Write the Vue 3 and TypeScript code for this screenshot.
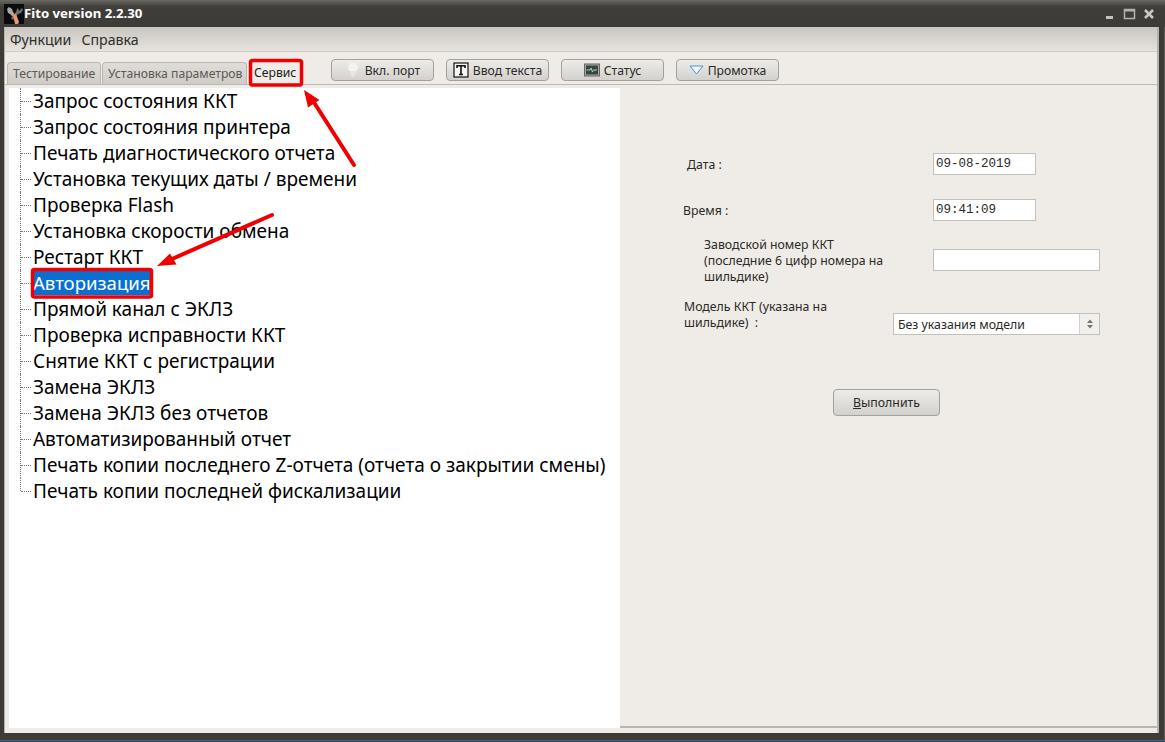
<script setup lang="ts">
const menus: string[] = ['Функции', 'Справка']
const tools: { label: string; icon: string }[] = [
  { label: 'Вкл. порт', icon: 'bulb' },
  { label: 'Ввод текста', icon: 'text' },
  { label: 'Статус', icon: 'monitor' },
  { label: 'Промотка', icon: 'tri' },
]
const items: string[] = [
  'Запрос состояния ККТ',
  'Запрос состояния принтера',
  'Печать диагностического отчета',
  'Установка текущих даты / времени',
  'Проверка Flash',
  'Установка скорости обмена',
  'Рестарт ККТ',
  'Авторизация',
  'Прямой канал с ЭКЛЗ',
  'Проверка исправности ККТ',
  'Снятие ККТ с регистрации',
  'Замена ЭКЛЗ',
  'Замена ЭКЛЗ без отчетов',
  'Автоматизированный отчет',
  'Печать копии последнего Z-отчета (отчета о закрытии смены)',
  'Печать копии последней фискализации',
]
</script>

<template>
  <div class="window">
    <header class="titlebar">
      <svg class="appicon" width="20" height="20" viewBox="0 0 20 20">
        <rect width="20" height="20" fill="#0b0b0b" />
        <path d="M3 5l2-2 3 2 1 3 3 4-2 2-4-4-2-1z" fill="#a9a9a7" />
        <path d="M18 4l-3 3-1-3-1 1-1 3-5 6 2 2 5-6 3-1 2-3z" fill="#6f6f6d" />
        <path d="M9 11l3-1 3 8-1 2-3 0z" fill="#e39a78" />
      </svg>
      <span class="apptitle">Fito version 2.2.30</span>
      <div class="winbtns">
        <svg width="50" height="12" viewBox="0 0 50 12">
          <rect x="0" y="8" width="7" height="3" fill="#c4c2bc" />
          <rect x="18.5" y="1.5" width="10" height="9" fill="none" stroke="#b5b3ad" stroke-width="1.5" />
          <rect x="18" y="1" width="11" height="2.5" fill="#b5b3ad" />
          <path d="M39 2l8 8M47 2l-8 8" stroke="#c9c7c1" stroke-width="2.6" />
        </svg>
      </div>
    </header>
    <div class="client">
      <nav class="menubar">
        <span v-for="m in menus" :key="m" class="menu">{{ m }}</span>
      </nav>
      <div class="tabrow">
        <div class="tabs">
          <span class="tab t1">Тестирование</span>
          <span class="tab t2">Установка параметров</span>
          <span class="tab active">Сервис</span>
        </div>
        <div class="tools">
          <button v-for="t in tools" :key="t.label" class="tool" type="button">
            <svg v-if="t.icon === 'bulb'" width="16" height="18" viewBox="0 0 16 18">
              <circle cx="8" cy="6.5" r="4.8" fill="#f4f3f0" />
              <path d="M5.5 10h5v4l-1.5 2h-2l-1.5-2z" fill="#e6e5e1" />
            </svg>
            <svg v-else-if="t.icon === 'text'" width="16" height="16" viewBox="0 0 16 16">
              <rect x="1" y="1" width="14" height="14" fill="#f4f4f2" stroke="#111" stroke-width="1.2" />
              <path d="M4 6V3.7h8V6M8 3.7v8.8M6 12.5h4" fill="none" stroke="#111" stroke-width="1.6" />
            </svg>
            <svg v-else-if="t.icon === 'monitor'" width="16" height="14" viewBox="0 0 16 14">
              <rect x="0.5" y="1" width="15" height="12" fill="#a5a5a2" stroke="#666" />
              <rect x="2" y="2.5" width="12" height="9" fill="#3a4542" />
              <path d="M2.5 7h3.5l1-2 1.5 4 1-2h3.5" fill="none" stroke="#a8d4b8" />
            </svg>
            <svg v-else width="15" height="10" viewBox="0 0 15 10">
              <path d="M1 1h13L7.5 9z" fill="#eef6fb" stroke="#4c93c0" />
            </svg>
            <span>{{ t.label }}</span>
          </button>
        </div>
      </div>
      <div class="panes">
        <ul class="tree">
          <li v-for="(it, i) in items" :key="it" class="node" :class="{ last: i === items.length - 1 }">
            <i class="stem"></i><i class="twig"></i>
            <span class="nodetext" :class="{ sel: it === 'Авторизация' }">{{ it }}</span>
          </li>
        </ul>
        <section class="form">
          <div class="row r-date">
            <label class="lab">Дата :</label>
            <input class="inp short" value="09-08-2019" />
          </div>
          <div class="row r-time">
            <label class="lab">Время :</label>
            <input class="inp short" value="09:41:09" />
          </div>
          <div class="row r-serial">
            <label class="lab">Заводской номер ККТ<br />(последние 6 цифр номера на<br />шильдике)</label>
            <input class="inp long" value="" />
          </div>
          <div class="row r-model">
            <label class="lab">Модель ККТ (указана на<br />шильдике)&nbsp; :</label>
            <div class="combo">
              <span class="combotext">Без указания модели</span>
              <span class="spin">
                <svg width="8" height="10" viewBox="0 0 8 10">
                  <path d="M4 0.5L7 4H1zM4 9.5L1 6h6z" fill="#77756f" />
                </svg>
              </span>
            </div>
          </div>
          <div class="actions">
            <button class="run" type="button"><u>В</u>ыполнить</button>
          </div>
        </section>
      </div>
    </div>
    <svg class="marks" width="1165" height="742" viewBox="0 0 1165 742">
      <rect x="250.5" y="60.5" width="51" height="24.5" rx="2" fill="none" stroke="#f00000" stroke-width="3.5" />
      <rect x="32.5" y="269.5" width="119" height="27.5" rx="2" fill="none" stroke="#f00000" stroke-width="3.5" />
      <path d="M354 165L315 104" stroke="#f00000" stroke-width="4" stroke-linecap="round" />
      <path d="M304 90L319.5 100 308 107.5z" fill="#f00000" />
      <path d="M272 215L172 259" stroke="#f00000" stroke-width="4" stroke-linecap="round" />
      <path d="M157 266L170 253.5 176.5 264.5z" fill="#f00000" />
    </svg>
  </div>
</template>

<style>
html, body { margin: 0; background: #3c3b37; }
</style>

<style scoped>
.window {
  position: relative;
  width: 1165px;
  height: 742px;
  box-sizing: border-box;
  overflow: hidden;
  display: flex;
  flex-direction: column;
  background: #3c3b37;
  padding: 0 6px 8px 4px;
  font-family: "Noto Sans", sans-serif;
  border-bottom: 1px solid #16507f;
  box-shadow: inset 0 -1px #5e5d57, inset -1px 0 #5e5d57;
}
.titlebar {
  height: 27px;
  flex: none;
  margin: 0 -6px 0 -4px;
  padding: 0 9px 0 4px;
  display: flex;
  align-items: center;
  background: linear-gradient(#6a6962, #3f3e3a 25%, #3c3b37);
}
.appicon { flex: none; }
.apptitle {
  color: #fff;
  font-weight: 700;
  font-size: 13.2px;
  padding-bottom: 2px;
}
.winbtns { margin-left: auto; display: flex; }
.client {
  flex: 1;
  min-height: 0;
  display: flex;
  flex-direction: column;
  background: #efece7;
  border-left: 1px solid #b5b2ac;
  border-right: 2px solid #b5b2ac;
}
.menubar {
  height: 24px;
  flex: none;
  display: flex;
  align-items: center;
  gap: 10px;
  padding-left: 5px;
  background: linear-gradient(#c9c6c1, #e6e3de);
  border-bottom: 1px solid #cfccc6;
  font-size: 14.2px;
  color: #2e2e2a;
}
.tabrow {
  height: 32px;
  flex: none;
  display: flex;
  align-items: flex-end;
  padding-left: 2px;
  border-bottom: 1px solid #bdbab4;
}
.tabs { display: flex; align-items: flex-end; font-size: 12.2px; width: 324px; flex: none; }
.tab {
  height: 22px;
  line-height: 22px;
  box-sizing: border-box;
  padding: 0 5px;
  color: #5a5955;
  white-space: nowrap;
  background: linear-gradient(#e0ddd8, #cfccc7);
  border: 1px solid #b9b6b0;
  border-bottom: none;
  border-radius: 4px 4px 0 0;
  margin-right: 1px;
}
.t1 { width: 94px; }
.t2 { width: 145px; }
.tab.active {
  width: 51px;
  padding: 0 3px;
  color: #1c1c1a;
  background: #efece7;
  border: none;
  margin-left: 3px;
}
.tools { display: flex; gap: 12px; align-self: flex-start; margin-top: 7px; }
.tool {
  width: 103px;
  height: 22px;
  box-sizing: border-box;
  display: flex;
  align-items: center;
  justify-content: center;
  gap: 4px;
  padding: 0;
  border: 1px solid #a3a19c;
  border-radius: 4px;
  background: linear-gradient(#eeece8, #d3d1cd);
  font: 12.2px "Noto Sans", sans-serif;
  color: #2a2a28;
}
.panes {
  flex: 1;
  min-height: 0;
  display: flex;
  padding: 3px 0 5px 4px;
}
.tree {
  width: 611px;
  flex: none;
  margin: 0;
  padding: 0 0 0 11px;
  box-sizing: border-box;
  background: #fff;
  list-style: none;
  font-size: 19px;
  color: #000;
}
.node { height: 26px; display: flex; align-items: center; white-space: nowrap; }
.stem { align-self: flex-start; height: 26px; border-left: 1px dotted #777; flex: none; }
.last .stem { height: 13px; }
.twig { width: 10px; border-top: 1px dotted #777; flex: none; }
.nodetext { padding-left: 2px; line-height: 24px; }
.nodetext.sel { background: #0a6fd0; color: #fff; font-size: 18.6px; }
.form {
  flex: 1;
  min-width: 0;
  box-sizing: border-box;
  border-bottom: 2px solid #b9b6b0;
  font-size: 12.3px;
  color: #2b2a28;
  padding: 65px 57px 0 0;
  display: flex;
  flex-direction: column;
}
.row { display: flex; justify-content: space-between; align-items: center; }
.lab { line-height: 16px; }
.r-date .lab, .r-time .lab { padding-top: 2px; }
.r-date { padding-left: 67px; padding-right: 64px; height: 22px; }
.r-time { padding-left: 63px; padding-right: 64px; height: 22px; margin-top: 24px; }
.r-serial { padding-left: 84px; height: 48px; margin-top: 16px; align-items: flex-start; }
.r-serial .inp { margin-top: 12px; }
.r-model { padding-left: 64px; height: 36px; margin-top: 14px; align-items: flex-start; }
.r-model .combo { margin-top: 14px; }
.inp {
  box-sizing: border-box;
  height: 22px;
  border: 1px solid #c4c1bb;
  background: #fff;
  outline: none;
  padding: 0 2px;
  font: 12.5px "Liberation Mono", monospace;
  color: #2b2a28;
}
.short { width: 103px; }
.long { width: 167px; }
.combo {
  width: 207px;
  height: 22px;
  box-sizing: border-box;
  border: 1px solid #c4c1bb;
  background: #fff;
  display: flex;
  align-items: center;
  padding-left: 4px;
}
.combotext { flex: 1; }
.spin {
  width: 19px;
  height: 20px;
  display: flex;
  align-items: center;
  justify-content: center;
  border-left: 1px solid #d4d1cb;
  background: #f2f0ec;
}
.actions { display: flex; justify-content: flex-end; margin-top: 54px; padding-right: 160px; }
.run {
  width: 107px;
  height: 27px;
  border: 1px solid #a3a19c;
  border-radius: 4px;
  background: linear-gradient(#eeece8, #d3d1cd);
  font: 12.3px "Noto Sans", sans-serif;
  color: #2a2a28;
  padding: 0;
}
.marks { position: absolute; left: 0; top: 0; pointer-events: none; }
</style>
